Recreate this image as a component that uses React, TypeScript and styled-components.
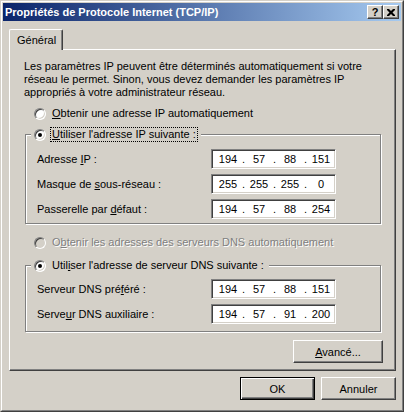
import styled, { createGlobalStyle, css } from "styled-components";

const Global = createGlobalStyle`
  html, body {
    margin: 0;
    padding: 0;
    background: #d4d0c8;
  }
  body {
    font-family: "Liberation Sans", Arial, sans-serif;
    font-size: 11px;
    color: #000;
  }
`;

const raised = css`
  border: 1px solid;
  border-color: #fff #404040 #404040 #fff;
  box-shadow: inset -1px -1px 0 #808080;
`;

const Window = styled.div`
  box-sizing: border-box;
  width: 404px;
  height: 412px;
  border: 1px solid;
  border-color: #d4d0c8 #404040 #404040 #d4d0c8;
  background: #d4d0c8;
`;

const Frame = styled.div`
  box-sizing: border-box;
  height: 100%;
  border: 1px solid;
  border-color: #fff #808080 #808080 #fff;
  padding: 1px;
  display: flex;
  flex-direction: column;
`;

const TitleBar = styled.div`
  height: 18px;
  flex: none;
  display: flex;
  align-items: center;
  padding: 0 2px 0 2px;
  background: linear-gradient(to right, #0a246a, #a6caf0);
`;

const Title = styled.div`
  flex: 1;
  color: #fff;
  font-weight: bold;
  font-size: 11px;
  white-space: nowrap;
`;

const CaptionButtons = styled.div`
  display: flex;
`;

const CaptionButton = styled.div`
  ${raised};
  box-sizing: border-box;
  width: 16px;
  height: 14px;
  background: #d4d0c8;
  display: flex;
  align-items: center;
  justify-content: center;
  font-weight: bold;
  font-size: 11px;
  line-height: 12px;
`;

const Content = styled.div`
  flex: 1;
  padding: 8px 5px 0 6px;
  display: flex;
  flex-direction: column;
`;

const TabStrip = styled.div`
  display: flex;
  height: 20px;
`;

const Tab = styled.div`
  position: relative;
  z-index: 1;
  box-sizing: border-box;
  height: 21px;
  padding: 0 6px 0 7px;
  display: flex;
  align-items: center;
  background: #d4d0c8;
  border-top: 1px solid #fff;
  border-left: 1px solid #fff;
  border-right: 1px solid #404040;
  border-radius: 2px 2px 0 0;
  box-shadow: inset -1px 0 0 #808080;
`;

const Panel = styled.div`
  box-sizing: border-box;
  border: 1px solid;
  border-color: #fff #404040 #404040 #fff;
  box-shadow: inset -1px -1px 0 #808080;
  padding: 10px 12px 7px 14px;
  display: flex;
  flex-direction: column;
`;

const Intro = styled.p`
  margin: 0;
  line-height: 13px;
  width: 340px;
`;

const RadioRow = styled.div<{ $top: number }>`
  display: flex;
  align-items: center;
  margin: ${(p) => p.$top}px 0 0 10px;
`;

const Radio = styled.span<{ $checked?: boolean; $disabled?: boolean }>`
  position: relative;
  box-sizing: border-box;
  width: 12px;
  height: 12px;
  flex: none;
  border-radius: 50%;
  border: 1px solid;
  border-color: #808080 #fff #fff #808080;
  background: ${(p) => (p.$disabled ? "#d4d0c8" : "#fff")};
  box-shadow: inset 1px 1px 0 #404040, inset -1px -1px 0 #d4d0c8;
  &::after {
    content: "";
    display: ${(p) => (p.$checked ? "block" : "none")};
    position: absolute;
    left: 3px;
    top: 3px;
    width: 4px;
    height: 4px;
    border-radius: 50%;
    background: #000;
  }
`;

const RadioLabel = styled.span<{ $focused?: boolean; $disabled?: boolean }>`
  display: inline-block;
  margin-left: 4px;
  padding: 0 1px;
  line-height: 13px;
  border: 1px dotted ${(p) => (p.$focused ? "#000" : "transparent")};
  white-space: nowrap;
  ${(p) =>
    p.$disabled &&
    css`
      color: #808080;
      text-shadow: 1px 1px 0 #fff;
    `}
`;

const GroupBox = styled.fieldset<{ $top: number; $pt: number; $pb: number }>`
  box-sizing: border-box;
  width: 356px;
  min-width: 0;
  margin: ${(p) => p.$top}px 0 0 1px;
  padding: ${(p) => p.$pt}px 0 ${(p) => p.$pb}px 11px;
  border: 1px solid #808080;
  box-shadow: inset 1px 1px 0 #fff, 1px 1px 0 #fff;
`;

const Legend = styled.legend`
  margin-left: -6px;
  padding: 0 3px;
  background: #d4d0c8;
`;

const LegendInner = styled.div`
  display: flex;
  align-items: center;
`;

const Fields = styled.div`
  display: grid;
  grid-template-columns: 174px 125px;
  grid-auto-rows: 20px;
  row-gap: 5px;
  align-items: center;
`;

const IpBox = styled.div`
  box-sizing: border-box;
  width: 125px;
  height: 20px;
  background: #fff;
  border: 1px solid;
  border-color: #808080 #fff #fff #808080;
  box-shadow: inset 1px 1px 0 #404040, inset -1px -1px 0 #d4d0c8;
  padding: 0 0 0 4px;
  display: flex;
  align-items: center;
  line-height: 16px;
`;

const Octet = styled.span`
  width: 24px;
  text-align: center;
`;

const Dot = styled.span`
  width: 7px;
  text-align: center;
`;

const ButtonRow = styled.div<{ $top: number; $gap?: number }>`
  display: flex;
  justify-content: flex-end;
  gap: ${(p) => p.$gap ?? 0}px;
  margin-top: ${(p) => p.$top}px;
`;

const Button = styled.div<{ $width: number; $default?: boolean }>`
  box-sizing: border-box;
  width: ${(p) => p.$width}px;
  height: 23px;
  display: flex;
  align-items: center;
  justify-content: center;
  background: #d4d0c8;
  ${(p) =>
    p.$default
      ? css`
          border: 1px solid #000;
          box-shadow: inset 1px 1px 0 #fff, inset -1px -1px 0 #404040,
            inset -2px -2px 0 #808080;
        `
      : raised}
`;

const Ip = ({ value }: { value: string }) => {
  const parts = value.split(".");
  return (
    <IpBox>
      {parts.map((p, i) => (
        <>
          <Octet key={"o" + i}>{p}</Octet>
          {i < 3 && <Dot key={"d" + i}>.</Dot>}
        </>
      ))}
    </IpBox>
  );
};

const App = () => {
  return (
    <Window>
      <Global />
      <Frame>
        <TitleBar>
          <Title>Propriétés de Protocole Internet (TCP/IP)</Title>
          <CaptionButtons>
            <CaptionButton>?</CaptionButton>
            <CaptionButton>
              <svg width="8" height="7" viewBox="0 0 8 7">
                <path d="M0 0h2l2 2 2-2h2v1L5.5 3.5 8 6v1H6L4 5 2 7H0V6l2.5-2.5L0 1z" fill="#000" />
              </svg>
            </CaptionButton>
          </CaptionButtons>
        </TitleBar>

        <Content>
          <TabStrip>
            <Tab>Général</Tab>
          </TabStrip>
          <Panel>
            <Intro>
              Les paramètres IP peuvent être déterminés automatiquement si votre réseau le
              permet. Sinon, vous devez demander les paramètres IP appropriés à votre
              administrateur réseau.
            </Intro>

            <RadioRow $top={7}>
              <Radio />
              <RadioLabel>
                <u>O</u>btenir une adresse IP automatiquement
              </RadioLabel>
            </RadioRow>

            <GroupBox $top={6} $pt={7} $pb={4}>
              <Legend>
                <LegendInner>
                  <Radio $checked />
                  <RadioLabel $focused>
                    <u>U</u>tiliser l'adresse IP suivante :
                  </RadioLabel>
                </LegendInner>
              </Legend>
              <Fields>
                <span>
                  Adresse <u>I</u>P :
                </span>
                <Ip value="194.57.88.151" />
                <span>
                  Masque de <u>s</u>ous-réseau :
                </span>
                <Ip value="255.255.255.0" />
                <span>
                  Passerelle par <u>d</u>éfaut :
                </span>
                <Ip value="194.57.88.254" />
              </Fields>
            </GroupBox>

            <RadioRow $top={11}>
              <Radio $disabled />
              <RadioLabel $disabled>
                O<u>b</u>tenir les adresses des serveurs DNS automatiquement
              </RadioLabel>
            </RadioRow>

            <GroupBox $top={8} $pt={6} $pb={7}>
              <Legend>
                <LegendInner>
                  <Radio $checked />
                  <RadioLabel>
                    Util<u>i</u>ser l'adresse de serveur DNS suivante :
                  </RadioLabel>
                </LegendInner>
              </Legend>
              <Fields>
                <span>
                  Serveur DNS pré<u>f</u>éré :
                </span>
                <Ip value="194.57.88.151" />
                <span>
                  Serve<u>u</u>r DNS auxiliaire :
                </span>
                <Ip value="194.57.91.200" />
              </Fields>
            </GroupBox>

            <ButtonRow $top={8}>
              <Button $width={90}>
                <span>
                  <u>A</u>vancé...
                </span>
              </Button>
            </ButtonRow>
          </Panel>

          <ButtonRow $top={6} $gap={6}>
            <Button $width={75} $default>
              OK
            </Button>
            <Button $width={75}>Annuler</Button>
          </ButtonRow>
        </Content>
      </Frame>
    </Window>
  );
};

export default App;
